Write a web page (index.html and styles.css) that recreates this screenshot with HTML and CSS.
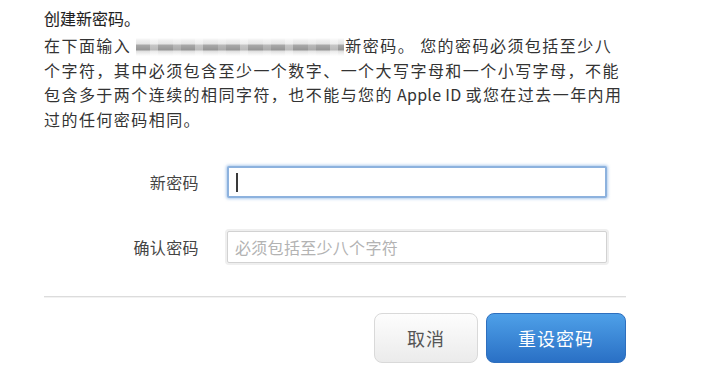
FILE: index.html
```html
<!DOCTYPE html>
<html lang="zh-CN">
<head>
<meta charset="utf-8">
<title>创建新密码</title>
<link rel="stylesheet" href="styles.css">
</head>
<body>
<main class="page">
  <h1 class="title">创建新密码。</h1>
  <p class="intro">在下面输入 <span class="blur"></span>新密码。 您的密码必须包括至少八<br>个字符，其中必须包含至少一个数字、一个大写字母和一个小写字母，不能<br>包含多于两个连续的相同字符，也不能与您的<span class="latin"> Apple ID </span>或您在过去一年内用<br>过的任何密码相同。</p>

  <div class="form">
    <div class="row">
      <div class="label">新密码</div>
      <div class="field focused"><span class="caret"></span></div>
    </div>
    <div class="row">
      <div class="label">确认密码</div>
      <div class="field"><span class="placeholder">必须包括至少八个字符</span></div>
    </div>
  </div>

  <div class="divider"></div>

  <div class="actions">
    <button class="btn cancel">取消</button>
    <button class="btn primary">重设密码</button>
  </div>
</main>
</body>
</html>
```

FILE: styles.css
```css
html, body {
  margin: 0;
  padding: 0;
  background: #ffffff;
}

body {
  font-family: "Noto Sans CJK SC", "Noto Sans", "Liberation Sans", sans-serif;
  color: #333333;
}

.page {
  width: 582px;
  padding: 6px 0 0 44px;
}

.title {
  margin: 0;
  font-size: 16px;
  font-weight: 400;
  line-height: 24px;
  letter-spacing: 0;
  color: #1f1f1f;
  -webkit-text-stroke: 0.1px #1f1f1f;
}

.intro {
  margin: 3px 0 0;
  font-size: 16px;
  line-height: 24.5px;
  letter-spacing: 1.45px;
  white-space: nowrap;
}

.latin {
  letter-spacing: 0.3px;
}

.blur {
  display: inline-block;
  width: 208px;
  height: 18px;
  vertical-align: -4px;
  margin-right: 1px;
  background:
    repeating-linear-gradient(to right,
      rgba(255,255,255,0) 0, rgba(255,255,255,0) 14px,
      rgba(255,255,255,0.35) 14px, rgba(255,255,255,0.35) 22px,
      rgba(255,255,255,0) 22px, rgba(255,255,255,0) 37px,
      rgba(255,255,255,0.2) 37px, rgba(255,255,255,0.2) 45px),
    linear-gradient(to bottom,
      rgba(255,255,255,0) 0,
      #f0f0f0 2px,
      #e4e4e4 6px,
      #a9a9a9 7px,
      #959595 12px,
      #dedede 13px,
      #f3f3f3 16px,
      rgba(255,255,255,0) 18px);
  filter: blur(0.5px);
}

.form {
  margin-top: 35px;
  display: flex;
  flex-direction: column;
  gap: 33px;
}

.row {
  display: flex;
  align-items: center;
  gap: 28px;
}

.label {
  width: 155px;
  text-align: right;
  font-size: 16px;
  letter-spacing: 0.4px;
  color: #444444;
}

.field {
  box-sizing: border-box;
  width: 380px;
  height: 32px;
  display: flex;
  align-items: center;
  padding-left: 7px;
  background: #ffffff;
  border: 1px solid #d2d2d2;
  border-radius: 2px;
  box-shadow: 0 0 0 2px #efefef;
}

.field.focused {
  border: 2px solid #8db2de;
  box-shadow: 0 0 3px 1px rgba(110, 160, 220, 0.55);
  padding-left: 7px;
}

.caret {
  width: 2px;
  height: 19px;
  background: #3a3a3a;
}

.placeholder {
  font-size: 16px;
  color: #b3b3b3;
  letter-spacing: 0.3px;
}

.divider {
  margin-top: 33px;
  height: 1px;
  background: #dcdcdc;
  box-shadow: 0 1px 0 #f2f2f2;
}

.actions {
  margin-top: 16px;
  display: flex;
  justify-content: flex-end;
  gap: 8px;
}

.btn {
  height: 50px;
  border-radius: 8px;
  font-family: inherit;
  font-size: 18px;
  letter-spacing: 1px;
  padding: 0;
}

.cancel {
  width: 104px;
  color: #555555;
  background: linear-gradient(to bottom, #fdfdfd, #ebebeb);
  border: 1px solid #d9d9d9;
}

.primary {
  width: 140px;
  color: #ffffff;
  background: linear-gradient(to bottom, #4ea0e8, #2a70c5);
  border: 1px solid #2e6fbe;
}
```
